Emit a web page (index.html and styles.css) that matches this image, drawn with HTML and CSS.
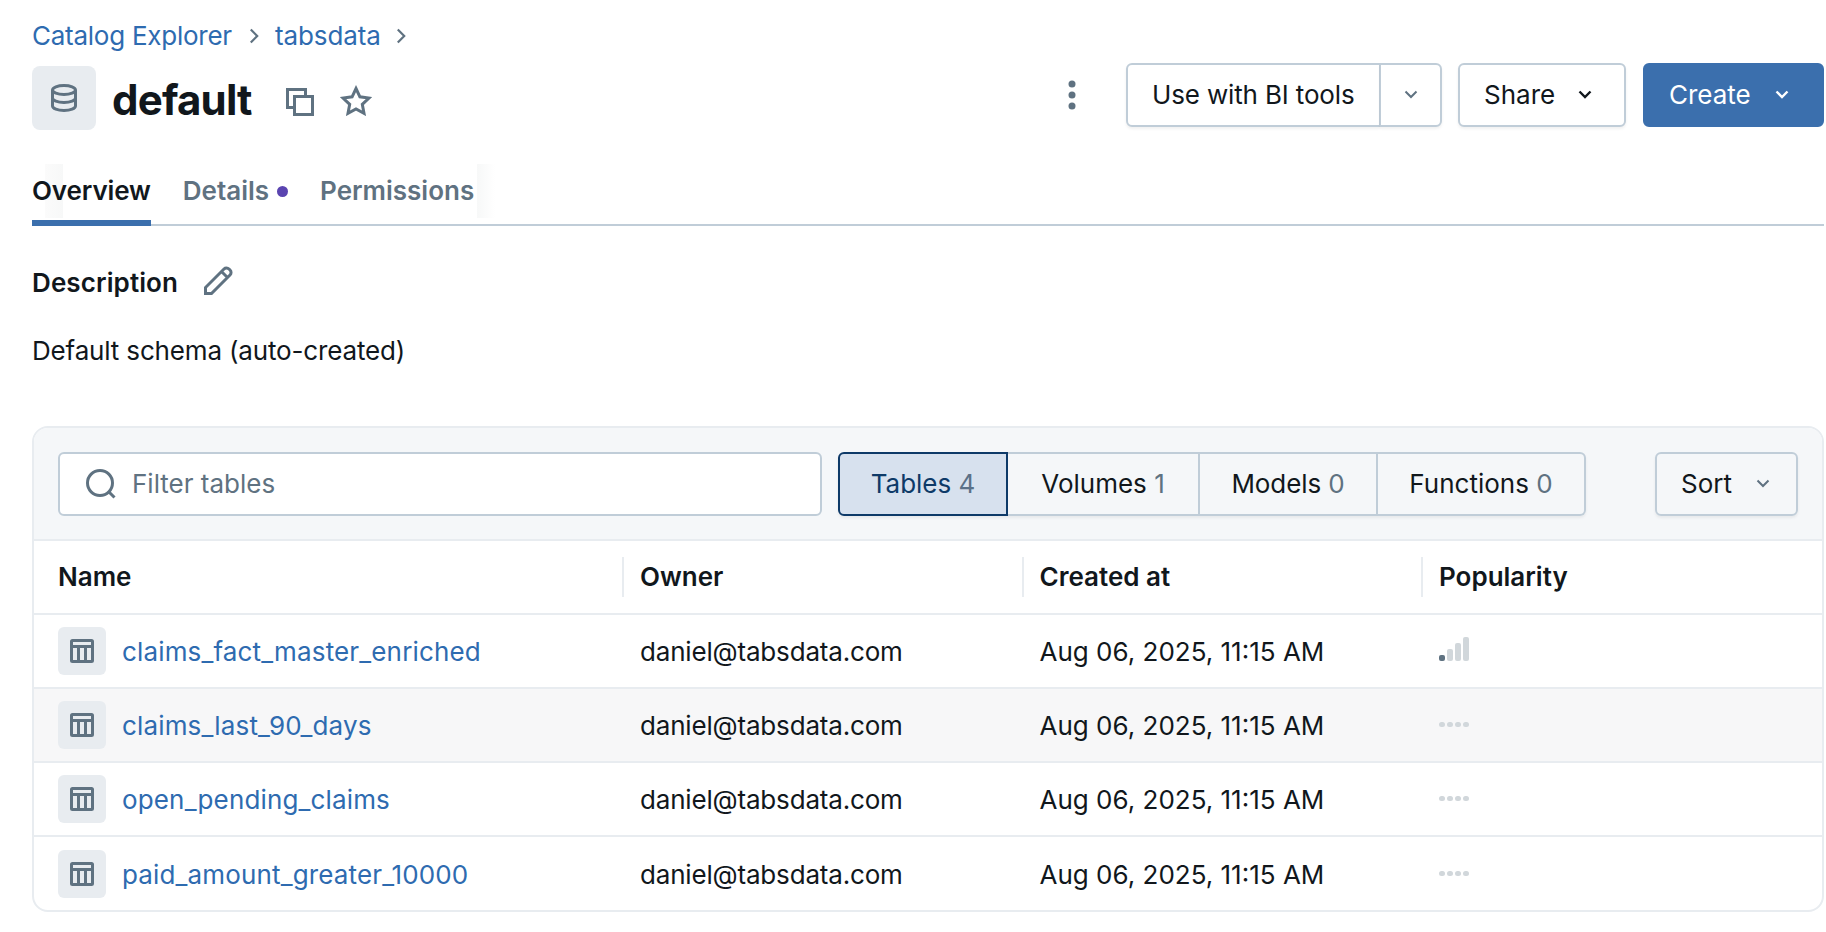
FILE: index.html
```html
<!DOCTYPE html>
<html lang="en">
<head>
<meta charset="utf-8">
<title>default</title>
<link rel="stylesheet" href="styles.css">
</head>
<body>
<main class="page">
  <nav class="crumbs">
    <a class="link crumb-root">Catalog Explorer</a>
    <svg class="crumb-sep" viewBox="0 0 10 14"><path d="M2.500 2 7.500 7 2.500 12"/></svg>
    <a class="link">tabsdata</a>
    <svg class="crumb-sep" viewBox="0 0 10 14"><path d="M2.500 2 7.500 7 2.500 12"/></svg>
  </nav>

  <header class="title-row">
    <div class="title-left">
      <span class="schema-icon">
        <svg viewBox="0 0 28 28" class="i28 stroke"><ellipse cx="14" cy="6" rx="11.500" ry="4.500"/><path d="M2.500 6v16c0 2.500 5.100 4.500 11.500 4.500S25.500 24.500 25.500 22V6M2.500 14c0 2.500 5.100 4.500 11.500 4.500S25.500 16.500 25.500 14"/></svg>
      </span>
      <h1 class="title">default</h1>
      <svg viewBox="0 0 28 28" class="i28 stroke copy-icon"><path d="M8.500 19.500h-7v-18h18v7"/><rect x="8.500" y="8.500" width="18" height="18"/></svg>
      <svg viewBox="0 0 32 31" class="star-icon stroke"><path d="m16 3.500 3.900 8.300 9.100 1.200-6.700 6.300 1.700 9-8-4.400-8 4.400 1.700-9L3 13l9.100-1.200z"/></svg>
    </div>
    <div class="actions">
      <svg class="kebab" viewBox="0 0 10 30"><circle cx="5" cy="4" r="3.500"/><circle cx="5" cy="15" r="3.500"/><circle cx="5" cy="26" r="3.500"/></svg>
      <div class="split">
        <button class="btn split-main">Use with BI tools</button>
        <button class="btn split-caret"><svg class="chev muted" viewBox="0 0 14 9"><path d="m1.500 1.500 5.500 5.500 5.500-5.500"/></svg></button>
      </div>
      <button class="btn share">Share <svg class="chev dark" viewBox="0 0 14 9"><path d="m1.500 1.500 5.500 5.500 5.500-5.500"/></svg></button>
      <button class="btn create">Create <svg class="chev light" viewBox="0 0 14 9"><path d="m1.500 1.500 5.500 5.500 5.500-5.500"/></svg></button>
    </div>
  </header>

  <div class="tabs">
    <span class="tab active">Overview</span>
    <span class="tab">Details<i class="dot"></i></span>
    <span class="tab">Permissions</span>
  </div>

  <section class="desc">
    <div class="desc-head">
      <h2 class="desc-title">Description</h2>
      <svg viewBox="0 0 30 30" class="pencil stroke"><path d="M2.500 27.500v-6L21 3a3.500 3.500 0 0 1 5 0l1 1a3.500 3.500 0 0 1 0 5L8.500 27.500zM18.500 5.500l6 6"/></svg>
    </div>
    <p class="desc-text">Default schema (auto-created)</p>
  </section>

  <section class="card">
    <div class="toolbar">
      <label class="search">
        <svg viewBox="0 0 30 30" class="search-icon stroke"><circle cx="14" cy="14" r="12.500"/><path d="m23 23 5.500 5.500"/></svg>
        <span class="placeholder">Filter tables</span>
      </label>
      <div class="segments">
        <span class="seg seg-on">Tables <b class="count">4</b></span>
        <span class="seg seg-v">Volumes <b class="count">1</b></span>
        <span class="seg seg-m">Models <b class="count">0</b></span>
        <span class="seg seg-f">Functions <b class="count">0</b></span>
      </div>
      <button class="btn sort">Sort <svg class="chev muted" viewBox="0 0 14 9"><path d="m1.500 1.500 5.500 5.500 5.500-5.500"/></svg></button>
    </div>

    <div class="grid head">
      <div class="hcell first">Name</div>
      <div class="hcell">Owner</div>
      <div class="hcell">Created at</div>
      <div class="hcell">Popularity</div>
    </div>

    <div class="grid row">
      <div class="cell first"><span class="tbl-box"><svg viewBox="0 0 24 24" class="i24 stroke2"><rect x="1.500" y="1.500" width="21" height="21" rx="1"/><path d="M1.500 7.500h21M8.500 7.500v15M15.500 7.500v15"/></svg></span><a class="link">claims_fact_master_enriched</a></div>
      <div class="cell owner">daniel@tabsdata.com</div>
      <div class="cell">Aug 06, 2025, 11:15 AM</div>
      <div class="cell"><span class="bars"><i class="bar b1 on"></i><i class="bar b2"></i><i class="bar b3"></i><i class="bar b4"></i></span></div>
    </div>
    <div class="grid row hover">
      <div class="cell first"><span class="tbl-box"><svg viewBox="0 0 24 24" class="i24 stroke2"><rect x="1.500" y="1.500" width="21" height="21" rx="1"/><path d="M1.500 7.500h21M8.500 7.500v15M15.500 7.500v15"/></svg></span><a class="link">claims_last_90_days</a></div>
      <div class="cell owner">daniel@tabsdata.com</div>
      <div class="cell">Aug 06, 2025, 11:15 AM</div>
      <div class="cell"><span class="dots"><i></i><i></i><i></i><i></i></span></div>
    </div>
    <div class="grid row">
      <div class="cell first"><span class="tbl-box"><svg viewBox="0 0 24 24" class="i24 stroke2"><rect x="1.500" y="1.500" width="21" height="21" rx="1"/><path d="M1.500 7.500h21M8.500 7.500v15M15.500 7.500v15"/></svg></span><a class="link">open_pending_claims</a></div>
      <div class="cell owner">daniel@tabsdata.com</div>
      <div class="cell">Aug 06, 2025, 11:15 AM</div>
      <div class="cell"><span class="dots"><i></i><i></i><i></i><i></i></span></div>
    </div>
    <div class="grid row">
      <div class="cell first"><span class="tbl-box"><svg viewBox="0 0 24 24" class="i24 stroke2"><rect x="1.500" y="1.500" width="21" height="21" rx="1"/><path d="M1.500 7.500h21M8.500 7.500v15M15.500 7.500v15"/></svg></span><a class="link">paid_amount_greater_10000</a></div>
      <div class="cell owner">daniel@tabsdata.com</div>
      <div class="cell">Aug 06, 2025, 11:15 AM</div>
      <div class="cell"><span class="dots"><i></i><i></i><i></i><i></i></span></div>
    </div>
  </section>
</main>
</body>
</html>
```

FILE: styles.css
```css
* { box-sizing: border-box; }
html, body { margin: 0; height: 100%; background: #fff; overflow: hidden; }
body { font-family: Inter, "Liberation Sans", sans-serif; font-size: 26px; color: #11171c; }
.page { padding: 18px 2px 0 32px; }
.link { color: #2e6bb0; }

.crumbs { display: flex; align-items: center; height: 35px; gap: 10px; }
.crumb-sep { width: 14px; height: 18px; margin: 0 3.500px; fill: none; stroke: #5f7281; stroke-width: 1.700; }
.crumbs .link { letter-spacing: -0.1px; }
.crumbs .crumb-root { letter-spacing: -0.25px; margin-right: 2px; }

.title-row { display: flex; justify-content: space-between; align-items: center; height: 64px; margin-top: 13px; }
.title-left { display: flex; align-items: center; }
.schema-icon { width: 64px; height: 64px; border-radius: 8px; background: #e8ecf0; display: flex; align-items: center; justify-content: center; }
.title { margin: 3px 0 0 16px; font-size: 42px; line-height: 64px; font-weight: 700; letter-spacing: -0.8px; }
.i28 { width: 28px; height: 28px; }
.i24 { width: 24px; height: 24px; }
.stroke { fill: none; stroke: #5f7281; stroke-width: 3; }
.stroke2 { fill: none; stroke: #5f7281; stroke-width: 3; }
.copy-icon { margin: 8px 0 0 34px; }
.star-icon { width: 32px; height: 31px; margin: 4px 0 0 26px; }

.actions { display: flex; align-items: center; margin-bottom: 7px; }
.kebab { width: 10px; height: 30px; fill: #5f7281; margin-right: 49px; }
.btn { height: 64px; font: inherit; color: #11171c; background: #fff; border: 2px solid #c0cdd8; border-radius: 6px; box-shadow: 0 2px 3px rgba(0,0,0,.06); display: flex; align-items: center; padding: 0; }
.split { display: flex; margin-right: 16px; }
.split-main { width: 254px; padding-left: 24px; border-radius: 6px 0 0 6px; border-right-width: 1px; letter-spacing: -0.15px; }
.split-caret { width: 62px; justify-content: center; border-radius: 0 6px 6px 0; border-left-width: 1px; }
.chev { width: 14px; height: 9px; fill: none; stroke-width: 2; }
.chev.muted { stroke: #5f7281; }
.chev.dark { stroke: #11171c; stroke-width: 2.400; }
.chev.light { stroke: #fff; stroke-width: 2.400; }
.share { width: 168px; padding-left: 24px; margin-right: 17px; gap: 23px; }
.create { width: 181px; padding-left: 24px; gap: 24px; color: #fff; background: #3b6fad; border-color: #3b6fad; box-shadow: none; }

.tabs { display: flex; gap: 32px; height: 62px; margin-top: 34px; border-bottom: 2px solid #c0cdd8; font-weight: 600; position: relative; }
.tabs::before, .tabs::after { content: ""; position: absolute; top: 0; bottom: 6px; width: 18px; }
.tabs::before { left: 13px; background: linear-gradient(90deg, #fbfbfb, #f7f8f8); }
.tabs::after { left: 445px; background: linear-gradient(90deg, #f7f8f8, #fff); }
.tab { color: #5f7281; line-height: 54px; height: 62px; position: relative; z-index: 1; }
.tab.active { color: #11171c; border-bottom: 6px solid #3b6fad; letter-spacing: -0.12px; }
.dot { display: inline-block; width: 11px; height: 11px; border-radius: 50%; background: #5a44b0; margin-left: 8px; vertical-align: 3px; }

.desc { height: 200px; padding-top: 34px; }
.desc-head { display: flex; align-items: center; height: 44px; }
.desc-title { margin: 0; font-size: 26px; font-weight: 600; letter-spacing: 0.1px; }
.pencil { width: 30px; height: 30px; margin-left: 25px; margin-bottom: 2px; }
.desc-text { margin: 29px 0 0; line-height: 36px; letter-spacing: -0.16px; }

.card { height: 486px; border: 2px solid #e8ecf0; border-radius: 16px; overflow: hidden; }
.toolbar { display: flex; align-items: center; height: 113px; padding: 0 24px 0 24px; background: #f5f7f9; border-bottom: 2px solid #e8ecf0; }
.search { width: 764px; height: 64px; background: #fff; border: 2px solid #c0cdd8; border-radius: 6px; display: flex; align-items: center; padding-left: 26px; }
.search-icon { width: 30px; height: 30px; }
.placeholder { margin-left: 16px; color: #5f7281; }
.segments { display: flex; height: 64px; margin-left: 16px; box-shadow: 0 2px 3px rgba(0,0,0,.06); border-radius: 6px; }
.seg { display: flex; align-items: center; justify-content: center; height: 64px; border: 2px solid #c0cdd8; border-left-width: 0; white-space: pre; }
.count { font-weight: 400; color: #5f7281; }
.seg-on { width: 170px; background: #d7e1ee; color: #0e3a68; border: 2px solid #0e3a68; border-radius: 6px 0 0 6px; }
.seg-on .count { color: #5b7188; }
.seg-v { width: 192px; }
.seg-m { width: 178px; letter-spacing: -0.1px; }
.seg-f { width: 208px; border-radius: 0 6px 6px 0; }
.sort { width: 143px; margin-left: auto; background: transparent; padding-left: 24px; gap: 24px; }

.grid { display: grid; grid-template-columns: 588px 399.500px 399.500px 1fr; }
.head { height: 74px; align-items: center; border-bottom: 2px solid #e8ecf0; font-weight: 600; }
.hcell { height: 40px; line-height: 40px; padding-left: 16px; border-left: 2px solid #e8ecf0; }
.hcell.first { padding-left: 24px; border-left: 0; }
.row { height: 74px; align-items: center; border-bottom: 2px solid #e8ecf0; }
.row:last-child { border-bottom: 0; }
.row.hover { background: #f7f7f8; }
.cell { padding-left: 18px; display: flex; align-items: center; }
.cell.first { padding-left: 24px; gap: 16px; }
.cell.first .link { letter-spacing: 0.15px; }
.cell.owner { letter-spacing: -0.18px; }
.tbl-box { width: 48px; height: 48px; border-radius: 6px; background: #e8ecf0; display: flex; align-items: center; justify-content: center; }
.bars { display: flex; align-items: flex-end; gap: 2px; height: 24px; margin-top: -4px; }
.bar { width: 6px; border-radius: 2px; background: #d1d7db; }
.bar.on { background: #5f7281; }
.b1 { height: 6px; } .b2 { height: 12px; } .b3 { height: 18px; } .b4 { height: 24px; }
.dots { display: flex; gap: 2px; margin-top: -2px; }
.dots i { width: 6px; height: 5px; border-radius: 2.500px; background: #d1d7db; }
```
